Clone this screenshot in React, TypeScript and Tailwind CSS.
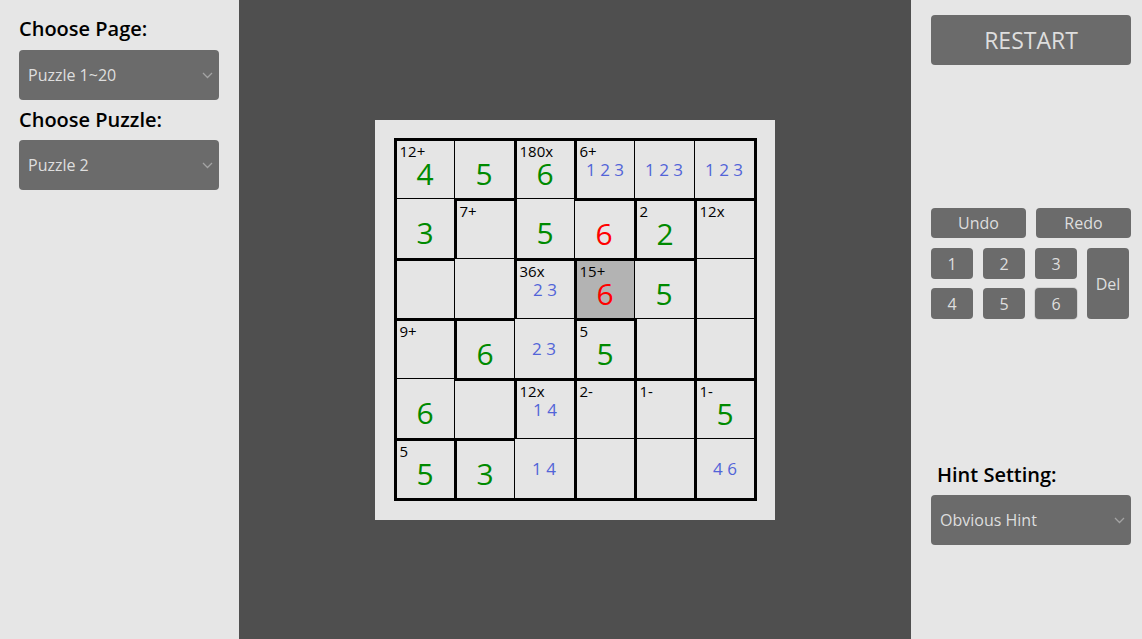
import React from 'react';

// Cage ids per cell, one string per row
const cages = ['AABCCC', 'ADBBEF', 'DDGHHF', 'IGGJHF', 'IIKLMN', 'OKKLMN'];

// Cage clues, keyed "row,col" of the cell that carries them
const clues: Record<string, string> = {
  '0,0': '12+',
  '0,2': '180x',
  '0,3': '6+',
  '1,1': '7+',
  '1,4': '2',
  '1,5': '12x',
  '2,2': '36x',
  '2,3': '15+',
  '3,0': '9+',
  '3,3': '5',
  '4,2': '12x',
  '4,3': '2-',
  '4,4': '1-',
  '4,5': '1-',
  '5,0': '5',
};

// '4' = placed value, '!6' = conflicting value, '.123' = pencil notes, '' = empty
const board: string[][] = [
  ['4', '5', '6', '.1 2 3', '.1 2 3', '.1 2 3'],
  ['3', '', '5', '!6', '2', ''],
  ['', '', '.2 3', '!6', '5', ''],
  ['', '6', '.2 3', '5', '', ''],
  ['6', '', '.1 4', '', '', '5'],
  ['5', '3', '.1 4', '', '', '.4 6'],
];

const selected = '2,3';

const font = { fontFamily: '"Open Sans", "Noto Sans", sans-serif' };

function Chevron() {
  return (
    <svg width="11" height="7" viewBox="0 0 11 7" className="shrink-0">
      <polyline points="1,1 5.5,5.5 10,1" fill="none" stroke="#a3a3a3" strokeWidth="1.3" />
    </svg>
  );
}

function Select({ value }: { value: string }) {
  return (
    <div className="flex h-[50px] w-[200px] shrink-0 items-center justify-between rounded bg-[#6b6b6b] pl-[9px] pr-[6px] text-[16px] font-medium text-[#dedede]">
      <span>{value}</span>
      <Chevron />
    </div>
  );
}

function Key({ label, focused }: { label: string; focused?: boolean }) {
  return (
    <button
      className={
        'flex h-[31px] w-[42px] items-center justify-center rounded bg-[#6b6b6b] text-[16px] font-medium text-[#dedede] ' +
        (focused ? 'ring-1 ring-[#d2d2d2]' : '')
      }
    >
      {label}
    </button>
  );
}

function Cell({ r, c }: { r: number; c: number }) {
  const id = cages[r][c];
  const thickTop = r === 0 || cages[r - 1][c] !== id;
  const thickLeft = c === 0 || cages[r][c - 1] !== id;
  const v = board[r][c];
  const clue = clues[`${r},${c}`];
  const isSel = selected === `${r},${c}`;

  let content: React.ReactNode = null;
  if (v.startsWith('.')) {
    content = <span className="text-[17px] leading-none text-[#5264d8]">{v.slice(1)}</span>;
  } else if (v.startsWith('!')) {
    content = <span className="pt-2 text-[30px] leading-none text-[#ff0000]">{v.slice(1)}</span>;
  } else if (v) {
    content = <span className="pt-2 text-[30px] leading-none text-[#008a00]">{v}</span>;
  }

  return (
    <div
      className={[
        'relative flex items-center justify-center border-black',
        thickTop ? 'border-t-[3px]' : 'border-t',
        thickLeft ? 'border-l-[3px]' : 'border-l',
        c === 5 ? 'border-r-[3px]' : '',
        r === 5 ? 'border-b-[3px]' : '',
        isSel ? 'bg-[#b3b3b3]' : 'bg-[#e5e5e5]',
      ].join(' ')}
    >
      {clue && (
        <span className="absolute left-[3px] top-[1px] text-[15px] leading-[18px] text-black">{clue}</span>
      )}
      {content}
    </div>
  );
}

export default function App() {
  return (
    <div className="flex h-[639px] w-full overflow-hidden" style={font}>
      {/* left: page / puzzle pickers */}
      <aside className="flex w-[239px] shrink-0 flex-col bg-[#e6e6e6] px-[19px] pt-[15px]">
        <h2 className="mb-[7px] text-[20px] font-semibold leading-[28px] text-black">Choose Page:</h2>
        <Select value="Puzzle 1~20" />
        <h2 className="mb-[6px] mt-[6px] text-[20px] font-semibold leading-[28px] text-black">Choose Puzzle:</h2>
        <Select value="Puzzle 2" />
      </aside>

      {/* board */}
      <main className="flex flex-1 items-center justify-center bg-[#4f4f4f]">
        <div className="flex h-[400px] w-[400px] items-center justify-center bg-[#e5e5e5]">
          <div className="grid grid-cols-[repeat(5,60px)_63px] grid-rows-[repeat(5,60px)_63px]">
            {cages.map((row, r) => row.split('').map((_, c) => <Cell key={`${r}-${c}`} r={r} c={c} />))}
          </div>
        </div>
      </main>

      {/* right: controls */}
      <aside className="flex w-[231px] shrink-0 flex-col bg-[#e6e6e6] pl-5 pr-[11px] pt-[15px]">
        <button className="flex h-[50px] w-[200px] items-center justify-center rounded bg-[#6b6b6b] text-[23px] font-medium text-[#dedede]">
          RESTART
        </button>

        <div className="mt-[143px] flex gap-[10px]">
          <button className="h-[30px] w-[95px] shrink-0 rounded bg-[#6b6b6b] text-[16px] font-medium text-[#dedede]">
            Undo
          </button>
          <button className="h-[30px] w-[95px] shrink-0 rounded bg-[#6b6b6b] text-[16px] font-medium text-[#dedede]">
            Redo
          </button>
        </div>
        <div className="mt-[10px] flex gap-[10px]">
          <div className="grid grid-cols-[42px_42px_42px] gap-x-[10px] gap-y-[9px]">
            {['1', '2', '3', '4', '5', '6'].map((n) => (
              <Key key={n} label={n} focused={n === '6'} />
            ))}
          </div>
          <button className="h-[71px] w-[42px] shrink-0 rounded bg-[#6b6b6b] text-[16px] font-medium text-[#dedede]">
            Del
          </button>
        </div>

        <h2 className="mb-[6px] ml-[6px] mt-[142px] text-[20px] font-semibold leading-[28px] text-black">
          Hint Setting:
        </h2>
        <Select value="Obvious Hint" />
      </aside>
    </div>
  );
}
